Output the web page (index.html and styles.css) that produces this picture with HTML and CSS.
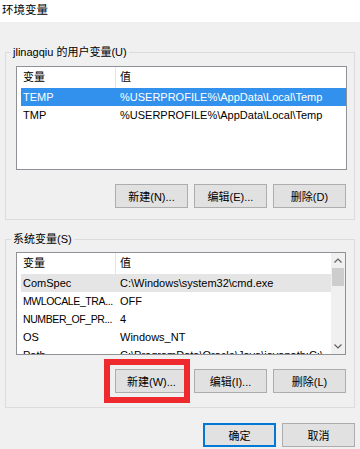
FILE: index.html
```html
<!DOCTYPE html>
<html lang="zh-CN">
<head>
<meta charset="utf-8">
<title>环境变量</title>
<link rel="stylesheet" href="styles.css">
</head>
<body>
<div class="window">
  <div class="titlebar">环境变量</div>
  <div class="content">
    <fieldset class="group group-user">
      <legend>jlinagqiu 的用户变量(U)</legend>
      <div class="inner inner-user">
        <div class="list list-user">
          <div class="lrow header">
            <span class="c1">变量</span><span class="c2">值</span>
          </div>
          <div class="lrow selected">
            <span class="c1">TEMP</span><span class="c2">%USERPROFILE%\AppData\Local\Temp</span>
          </div>
          <div class="lrow">
            <span class="c1">TMP</span><span class="c2">%USERPROFILE%\AppData\Local\Temp</span>
          </div>
        </div>
        <div class="btnrow">
          <button class="btn">新建(N)...</button>
          <button class="btn">编辑(E)...</button>
          <button class="btn">删除(D)</button>
        </div>
      </div>
    </fieldset>

    <fieldset class="group group-sys">
      <legend>系统变量(S)</legend>
      <div class="inner inner-sys">
        <div class="list list-sys">
          <div class="listbody">
            <div class="lrow header">
              <span class="c1">变量</span><span class="c2">值</span>
            </div>
            <div class="lrow hover">
              <span class="c1">ComSpec</span><span class="c2">C:\Windows\system32\cmd.exe</span>
            </div>
            <div class="lrow">
              <span class="c1 tight">MWLOCALE_TRA...</span><span class="c2">OFF</span>
            </div>
            <div class="lrow">
              <span class="c1 tight">NUMBER_OF_PR...</span><span class="c2">4</span>
            </div>
            <div class="lrow">
              <span class="c1">OS</span><span class="c2">Windows_NT</span>
            </div>
            <div class="lrow">
              <span class="c1">Path</span><span class="c2">C:\ProgramData\Oracle\Java\javapath;C:\</span>
            </div>
          </div>
          <div class="scrollbar">
            <div class="arrow">
              <svg width="8" height="5" viewBox="0 0 8 5"><path d="M0.5 4.5 L4 1 L7.5 4.5" fill="none" stroke="#606060" stroke-width="1.2"/></svg>
            </div>
            <div class="thumb"></div>
            <div class="track"></div>
            <div class="arrow">
              <svg width="8" height="5" viewBox="0 0 8 5"><path d="M0.5 0.5 L4 4 L7.5 0.5" fill="none" stroke="#606060" stroke-width="1.2"/></svg>
            </div>
          </div>
        </div>
        <div class="btnrow btnrow-sys">
          <div class="marked">
            <button class="btn">新建(W)...</button>
            <div class="redbox"></div>
          </div>
          <button class="btn">编辑(I)...</button>
          <button class="btn">删除(L)</button>
        </div>
      </div>
    </fieldset>

    <div class="dialog-buttons">
      <button class="btn btn-default">确定</button>
      <button class="btn">取消</button>
    </div>
  </div>
</div>
</body>
</html>
```

FILE: styles.css
```css
* { box-sizing: border-box; }

html, body {
  margin: 0;
  padding: 0;
}

body {
  width: 360px;
  height: 449px;
  overflow: hidden;
  background: #f0f0f0;
  font-family: "Liberation Sans", "Noto Sans CJK SC", sans-serif;
  font-size: 11px;
  color: #000;
}

.window {
  display: flex;
  flex-direction: column;
  height: 449px;
}

.titlebar {
  height: 22px;
  line-height: 20px;
  padding-left: 2px;
  background: #fff;
  font-size: 11.5px;
}

.content {
  padding: 22px 5px 0 5px;
  display: flex;
  flex-direction: column;
}

.group {
  margin: 0;
  padding: 0;
  width: 350px;
  border: 1px solid #dcdcdc;
  min-width: 0;
}

.group legend {
  margin-left: 5px;
  padding: 0 2px;
  height: 16px;
  line-height: 16px;
  font-size: 11px;
  color: #000;
}

.group-sys {
  margin-top: 11px;
}

.inner {
  padding: 0 7px 0 10px;
  display: flex;
  flex-direction: column;
}

.inner-user {
  padding-top: 6px;
  padding-bottom: 11px;
}

.inner-sys {
  padding-top: 5px;
  padding-bottom: 14px;
}

.list {
  background: #fff;
  border: 1px solid #8f9196;
  overflow: hidden;
  width: 331px;
}

.list-user {
  height: 104px;
  padding-left: 4px;
}

.list-sys {
  width: 330px;
  height: 103px;
  display: flex;
}

.listbody {
  flex: 1;
  padding-left: 4px;
  overflow: hidden;
}

.lrow {
  display: grid;
  grid-template-columns: 94px 215px;
  height: 18px;
  line-height: 18px;
  white-space: nowrap;
}

.lrow span {
  overflow: hidden;
}

.lrow .c1 {
  padding-left: 2px;
}

.lrow .c1.tight {
  font-size: 10.5px;
  letter-spacing: -0.4px;
}

.lrow .c2 {
  padding-left: 5px;
}

.lrow.header {
  height: 21px;
  line-height: 21px;
}

.lrow.header .c2 {
  border-left: 1px solid #e5e5e5;
  padding-left: 4px;
}

.lrow.selected {
  background: #3391ee;
  color: #fff;
}

.lrow.hover {
  background: #e5e5e5;
}

.scrollbar {
  width: 14px;
  background: #f0f0f0;
  display: flex;
  flex-direction: column;
}

.arrow {
  height: 15px;
  display: flex;
  align-items: center;
  justify-content: center;
}

.thumb {
  height: 18px;
  margin: 0 1px;
  background: #cdcdcd;
}

.track {
  flex: 1;
}

.btnrow {
  display: flex;
  justify-content: flex-end;
  gap: 6px;
  margin-top: 14px;
  padding-right: 1px;
}

.btn {
  width: 73px;
  height: 24px;
  margin: 0;
  padding: 0;
  background: #e1e1e1;
  border: 1px solid #adadad;
  font-family: "Liberation Sans", "Noto Sans CJK SC", sans-serif;
  font-size: 11px;
  color: #000;
}

.marked {
  position: relative;
  display: flex;
}

.redbox {
  position: absolute;
  left: -11px;
  top: -10px;
  right: -2px;
  bottom: -10px;
  border: 6px solid #ee2a2e;
  pointer-events: none;
}

.dialog-buttons {
  display: flex;
  justify-content: flex-end;
  gap: 6px;
  margin-top: 15px;
  padding-right: 0;
}

.btn-default {
  border-color: #0078d7;
  box-shadow: inset 0 0 0 1px #0078d7;
}
```
